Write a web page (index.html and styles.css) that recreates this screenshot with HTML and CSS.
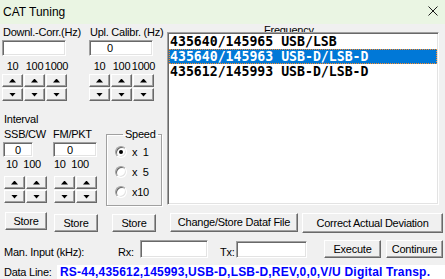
FILE: index.html
```html
<!DOCTYPE html>
<html lang="en">
<head>
    <meta charset="UTF-8">
    <title>CAT Tuning</title>
    <link rel="stylesheet" href="styles.css">
</head>
<body>
    <div class="window">
        <div class="titlebar">
            <span class="title">CAT Tuning</span>
            <svg class="close" width="10" height="10" viewBox="0 0 10 10">
                <path d="M0.5 0.5L9.5 9.5M9.5 0.5L0.5 9.5" stroke="#1a1a1a" stroke-width="1"/>
            </svg>
        </div>

        <div class="main">
            <div class="left">
                <div class="corr-row">
                    <div class="corr">
                        <div class="label">Downl.-Corr.(Hz)</div>
                        <input class="field" type="text" value="">
                        <div class="steps">
                            <span>10</span><span>100</span><span>1000</span>
                            <button class="spin up"></button>
                            <button class="spin up"></button>
                            <button class="spin up"></button>
                            <button class="spin down"></button>
                            <button class="spin down"></button>
                            <button class="spin down"></button>
                        </div>
                    </div>
                    <div class="corr calib">
                        <div class="label">Upl. Calibr. (Hz)</div>
                        <input class="field" type="text" value="0">
                        <div class="steps">
                            <span>10</span><span>100</span><span>1000</span>
                            <button class="spin up"></button>
                            <button class="spin up"></button>
                            <button class="spin up"></button>
                            <button class="spin down"></button>
                            <button class="spin down"></button>
                            <button class="spin down"></button>
                        </div>
                    </div>
                </div>

                <div class="interval-title">Interval</div>
                <div class="interval-row">
                    <div class="interval ssb">
                        <div class="label">SSB/CW</div>
                        <input class="field" type="text" value="0">
                        <div class="label small">10&nbsp; 100</div>
                        <div class="pair">
                            <button class="spin up"></button>
                            <button class="spin up"></button>
                            <button class="spin down"></button>
                            <button class="spin down"></button>
                        </div>
                    </div>
                    <div class="interval fm">
                        <div class="label">FM/PKT</div>
                        <input class="field" type="text" value="0">
                        <div class="label small">10&nbsp; 100</div>
                        <div class="pair">
                            <button class="spin up"></button>
                            <button class="spin up"></button>
                            <button class="spin down"></button>
                            <button class="spin down"></button>
                        </div>
                    </div>
                    <fieldset class="speed">
                        <legend>Speed</legend>
                        <label class="opt"><span class="radio on"></span>x&nbsp;&nbsp;1</label>
                        <label class="opt"><span class="radio"></span>x&nbsp;&nbsp;5</label>
                        <label class="opt"><span class="radio"></span>x10</label>
                    </fieldset>
                </div>
            </div>

            <div class="right">
                <div class="list-caption">Frequency</div>
                <div class="listbox">
                    <div class="item">435640/145965 USB/LSB</div>
                    <div class="item selected">435640/145963 USB-D/LSB-D</div>
                    <div class="item">435612/145993 USB-D/LSB-D</div>
                </div>
            </div>
        </div>

        <div class="actions">
            <button class="btn store1">Store</button>
            <button class="btn store2">Store</button>
            <button class="btn store3">Store</button>
            <button class="btn change">Change/Store Dataf File</button>
            <button class="btn correct">Correct Actual Deviation</button>
        </div>

        <div class="manual">
            <span class="man-label">Man. Input (kHz):</span>
            <span class="rx-label">Rx:</span>
            <input class="field rx" type="text" value="">
            <span class="tx-label">Tx:</span>
            <input class="field tx" type="text" value="">
            <button class="btn execute">Execute</button>
            <button class="btn continue">Continure</button>
        </div>

        <div class="dataline">
            <span class="data-label">Data Line:</span>
            <div class="data-value">RS-44,435612,145993,USB-D,LSB-D,REV,0,0,V/U Digital Transp.</div>
        </div>
    </div>
</body>
</html>
```

FILE: styles.css
```css
* {
    box-sizing: border-box;
    margin: 0;
    padding: 0;
}

body {
    width: 445px;
    height: 279px;
    overflow: hidden;
    background-color: #f0f0f0;
    font-family: "Liberation Sans", Arial, sans-serif;
    font-size: 11px;
    line-height: 13px;
    letter-spacing: -0.25px;
    color: #000;
}

.titlebar {
    height: 24px;
    background-color: #eaf5e3;
    display: flex;
    align-items: center;
    justify-content: space-between;
    padding: 0 7px 0 3px;
}

.title {
    font-size: 12px;
    line-height: 14px;
    letter-spacing: 0;
}

.close {
    margin-top: -2px;
}

/* inputs and buttons in the old 3D look */
.field {
    display: block;
    height: 16px;
    background: #fff;
    border: 1px solid;
    border-color: #a0a0a0 #fff #fff #a0a0a0;
    box-shadow: inset 1px 1px 0 #696969, inset -1px -1px 0 #e3e3e3;
    font: inherit;
    letter-spacing: inherit;
    color: #000;
    padding: 0 3px;
    outline: none;
}

.spin,
.btn {
    display: block;
    background: #f0f0f0;
    border: 1px solid;
    border-color: #fff #696969 #696969 #fff;
    box-shadow: inset -1px -1px 0 #a0a0a0;
    font: inherit;
    letter-spacing: inherit;
    color: #000;
}

.spin {
    width: 21px;
    height: 13px;
    display: flex;
    align-items: center;
    justify-content: center;
}

.spin::after {
    content: "";
    width: 7px;
    height: 4px;
    background: #000;
}

.spin.up::after {
    clip-path: polygon(50% 0, 100% 100%, 0 100%);
}

.spin.down::after {
    clip-path: polygon(0 0, 100% 0, 50% 100%);
}

.main {
    display: flex;
    height: 181px;
}

.left {
    width: 167px;
}

.corr-row {
    display: flex;
    padding-top: 2px;
}

.corr {
    width: 65px;
    margin-left: 2px;
}

.corr.calib {
    margin-left: 22px;
}

.corr .label {
    padding-left: 1px;
    white-space: nowrap;
}

.corr .field {
    width: 64px;
    margin-top: 1px;
}

.calib .field {
    padding-left: 17px;
}

.steps {
    display: grid;
    grid-template-columns: repeat(3, 21px);
    grid-template-rows: repeat(3, 13px);
    gap: 1px;
    margin-top: 4px;
}

.steps span {
    text-align: center;
    white-space: nowrap;
    display: flex;
    justify-content: center;
}

.interval-title {
    margin: 12px 0 0 4px;
}

.interval-row {
    display: flex;
    align-items: flex-start;
    margin-top: 2px;
}

.interval {
    width: 45px;
}

.interval .label {
    white-space: nowrap;
}

.interval .field {
    height: 15px;
    margin-top: 1px;
}

.interval .small {
    margin-top: 1px;
}

.ssb {
    margin-left: 3px;
}

.ssb .label {
    padding-left: 1px;
}

.ssb .field {
    width: 30px;
    text-align: center;
}

.ssb .small {
    padding-left: 3px;
}

.fm {
    margin-left: 5px;
}

.fm .field {
    width: 44px;
    padding-left: 13px;
}

.fm .small {
    padding-left: 1px;
}

.pair {
    display: grid;
    grid-template-columns: repeat(2, 21px);
    gap: 1px;
    margin-top: 5px;
}

.ssb .pair {
    margin-left: 1px;
}

.fm .pair {
    margin-left: 1px;
}

.speed {
    margin-left: 8px;
    width: 56px;
    height: 78px;
    border: 1px solid #a0a0a0;
    box-shadow: 1px 1px 0 #fff, inset 1px 1px 0 #fff;
    padding: 1px 0 0 8px;
    min-width: 0;
}

.speed legend {
    margin-left: 8px;
    padding: 0 2px;
}

.opt {
    display: flex;
    align-items: center;
    gap: 5px;
    height: 20px;
    white-space: nowrap;
}

.radio {
    width: 12px;
    height: 12px;
    border-radius: 50%;
    background: #fff;
    border: 1px solid;
    border-color: #a0a0a0 #fff #fff #a0a0a0;
    box-shadow: inset 1px 1px 0 #696969, inset -1px -1px 0 #e3e3e3;
    display: flex;
    align-items: center;
    justify-content: center;
}

.radio.on::after {
    content: "";
    width: 4px;
    height: 4px;
    border-radius: 50%;
    background: #000;
}

.right {
    width: 272px;
    display: flex;
    flex-direction: column;
}

.list-caption {
    height: 8px;
    overflow: hidden;
    padding-left: 97px;
}

.listbox {
    flex: 1;
    background: #fff;
    border: 1px solid;
    border-color: #a0a0a0 #fff #fff #a0a0a0;
    box-shadow: inset 1px 1px 0 #696969, inset -1px -1px 0 #e3e3e3;
    padding: 1px 1px 0 1px;
}

.item {
    height: 15px;
    line-height: 15px;
    padding-left: 1px;
    font-family: "DejaVu Sans Mono", monospace;
    font-weight: bold;
    font-size: 13.2px;
    letter-spacing: 0;
    white-space: nowrap;
}

.item.selected {
    background: #0078d7;
    color: #fff;
    outline: 1px dotted #ff8c28;
    outline-offset: -1px;
}

.actions {
    display: flex;
    align-items: flex-start;
    height: 21px;
    margin-top: 7px;
}

.btn {
    height: 18px;
    text-align: center;
    white-space: nowrap;
}

.store1 {
    margin-left: 5px;
    width: 42px;
}

.store2 {
    margin: 2px 0 0 7px;
    width: 44px;
}

.store3 {
    margin: 2px 0 0 14px;
    width: 44px;
}

.change {
    margin: 1px 0 0 14px;
    width: 128px;
    height: 19px;
}

.correct {
    margin: 1px 0 0 4px;
    width: 141px;
    height: 20px;
}

.manual {
    display: flex;
    align-items: flex-start;
    height: 19px;
    margin-top: 7px;
}

.man-label {
    width: 114px;
    margin: 6px 0 0 4px;
    white-space: nowrap;
}

.rx-label,
.tx-label {
    margin-top: 6px;
}

.rx-label {
    width: 22px;
}

.field.rx {
    width: 68px;
    height: 18px;
}

.tx-label {
    width: 16px;
    margin-left: 12px;
}

.field.tx {
    width: 71px;
    height: 17px;
    margin-top: 1px;
}

.execute {
    margin-left: 17px;
    width: 57px;
}

.continue {
    margin-left: 5px;
    width: 57px;
}

.dataline {
    display: flex;
    margin-top: 6px;
    height: 14px;
}

.data-label {
    width: 53px;
    margin-left: 4px;
    padding-top: 1px;
    white-space: nowrap;
}

.data-value {
    flex: 1;
    background: #fff;
    padding-left: 3px;
    color: #0000ff;
    font-weight: bold;
    font-size: 12px;
    line-height: 14px;
    letter-spacing: 0.2px;
    white-space: nowrap;
    overflow: hidden;
}
```
